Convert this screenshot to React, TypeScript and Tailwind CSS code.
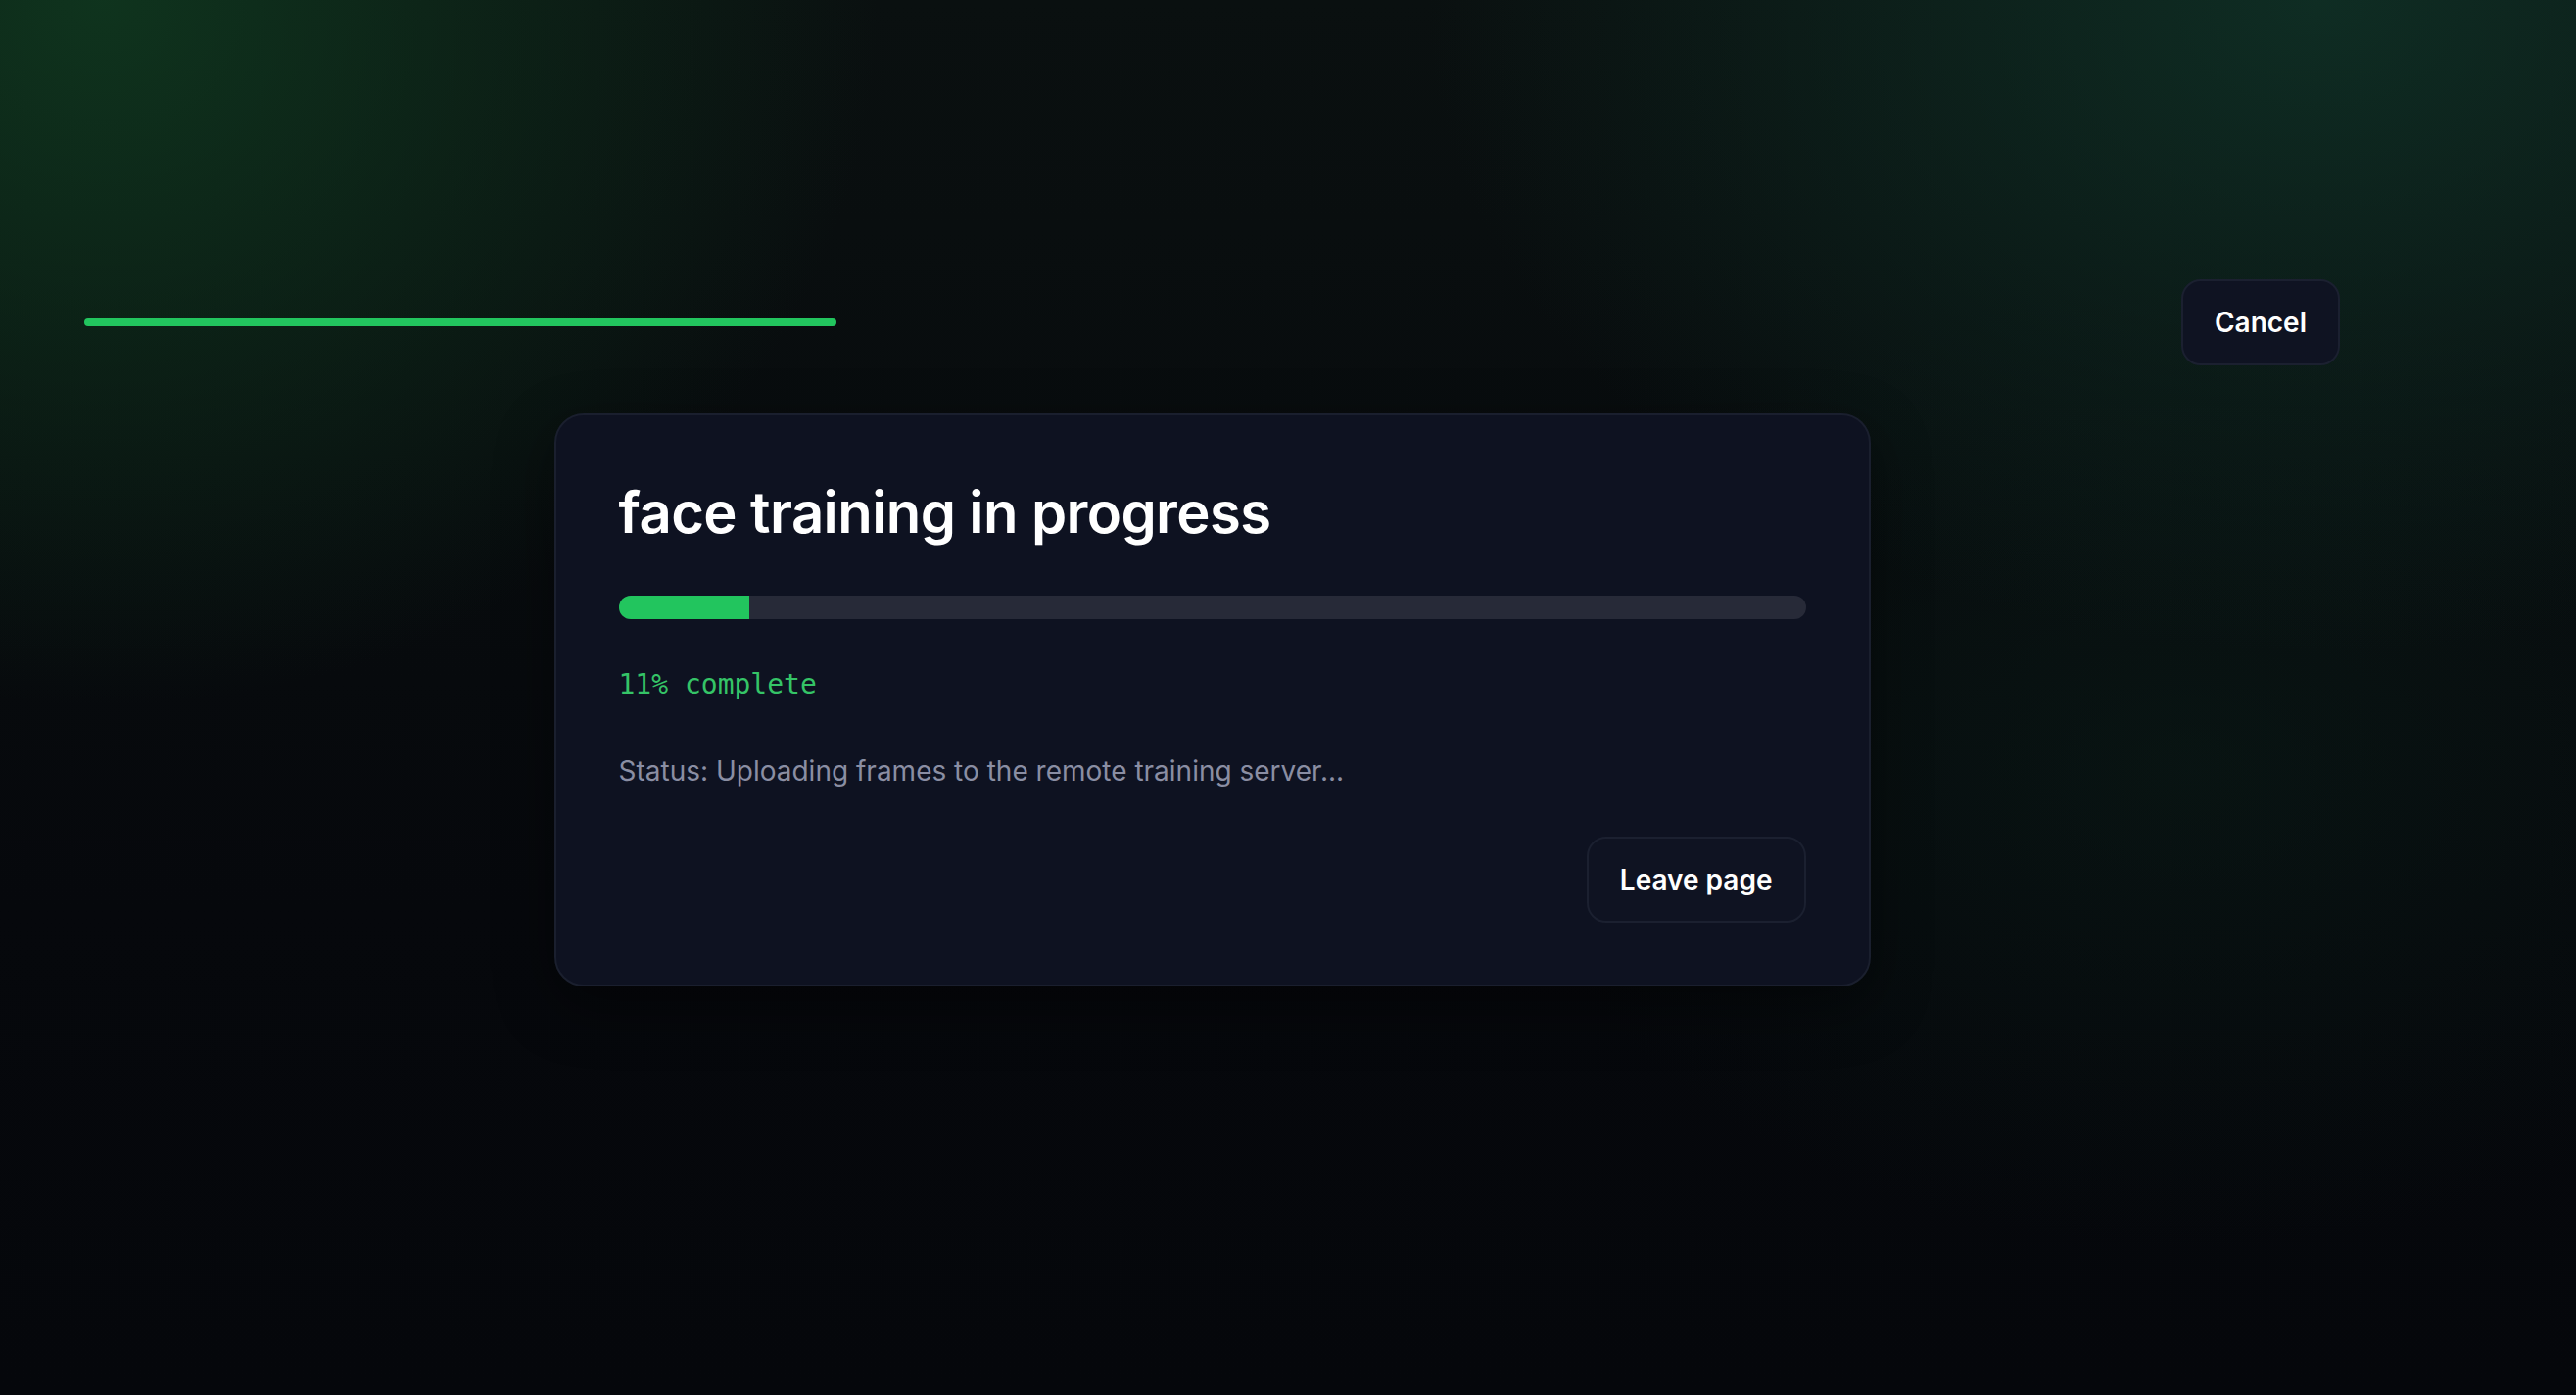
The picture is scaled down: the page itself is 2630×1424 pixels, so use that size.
const PROGRESS = 11;

function TopProgress() {
  return <div className="h-2 w-1/3 rounded-full bg-[#22c55e]" />;
}

function GhostButton({ label }: { label: string }) {
  return (
    <button className="h-[88px] rounded-[20px] border-2 border-[#1b2030] bg-[#0f1322] px-[32px] text-[28px] font-semibold text-white">
      {label}
    </button>
  );
}

function TrainingCard({ progress }: { progress: number }) {
  return (
    <div className="mx-auto mt-[49px] w-[1344px] rounded-[30px] border-2 border-[#1a1f2e] bg-[#0e1221] px-[64px] pt-[68px] pb-[63px] shadow-[0_20px_60px_rgba(0,0,0,0.45)]">
      <h1 className="text-[58px] leading-[1.1] font-semibold tracking-[-0.01em] text-white">
        face training in progress
      </h1>
      <div className="mt-[52px] h-6 w-full overflow-hidden rounded-full bg-[#272a38]">
        <div className="h-full bg-[#22c55e]" style={{ width: `${progress}%` }} />
      </div>
      <p className="mt-[46px] font-['DejaVu_Sans_Mono',monospace] text-[28px] leading-[42px] text-[#35c467]">
        {progress}% complete
      </p>
      <p className="mt-[47px] text-[28px] leading-[40px] text-[#8a8ea3]">
        Status: Uploading frames to the remote training server...
      </p>
      <div className="mt-[47px] flex justify-end">
        <GhostButton label="Leave page" />
      </div>
    </div>
  );
}

export default function App() {
  return (
    <div className="min-h-screen w-full bg-[radial-gradient(1100px_1000px_at_4%_0%,rgba(16,58,32,0.85),transparent_72%),radial-gradient(1300px_950px_at_90%_0%,rgba(16,52,40,0.8),transparent_70%),radial-gradient(1000px_700px_at_85%_55%,rgba(10,30,24,0.5),transparent_70%),linear-gradient(to_bottom,#0a1010,#06080c_65%,#05070b)] font-['Inter',sans-serif]">
      <div className="ml-[86px] w-[2303px] pt-[285px] pb-[120px]">
        <div className="flex items-center justify-between">
          <TopProgress />
          <GhostButton label="Cancel" />
        </div>
        <TrainingCard progress={PROGRESS} />
      </div>
    </div>
  );
}
